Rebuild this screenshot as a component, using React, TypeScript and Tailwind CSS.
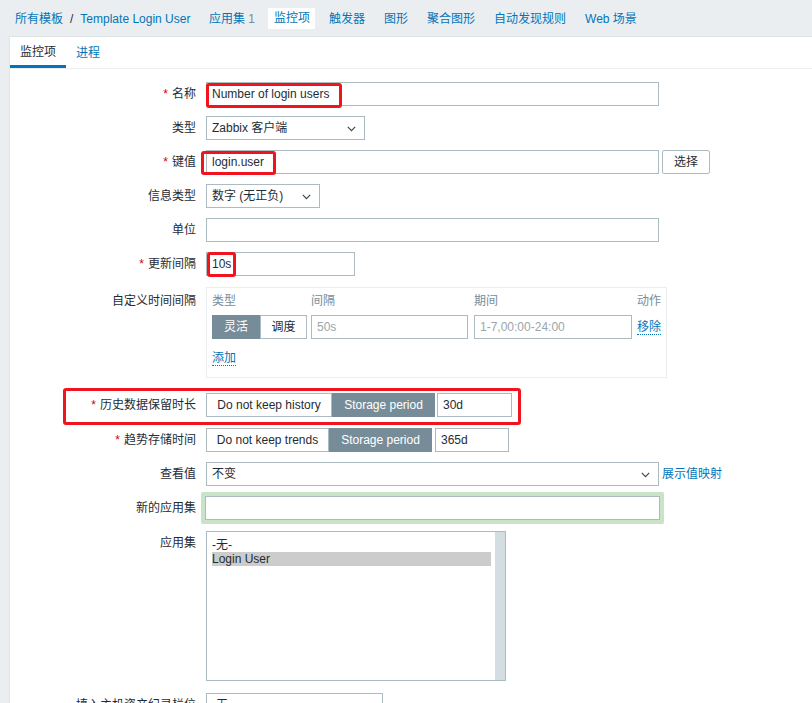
import type { ReactNode } from 'react'

const FONT = "font-['Liberation_Sans','Noto_Sans_CJK_SC',sans-serif]"

function Chevron() {
  return (
    <svg width="9" height="6" viewBox="0 0 9 6" className="absolute right-[8px] top-[9px]">
      <path d="M0.8 0.8 L4.5 4.6 L8.2 0.8" fill="none" stroke="#3a4a52" strokeWidth="1.2" />
    </svg>
  )
}

function Select({ value, className }: { value: string; className: string }) {
  return (
    <div className={`relative h-[24px] border border-[#acbbc2] bg-white pl-[5px] leading-[22px] ${className}`}>
      {value}
      <Chevron />
    </div>
  )
}

function Input({ value, className, placeholder }: { value?: string; className: string; placeholder?: string }) {
  return (
    <div className={`h-[24px] border border-[#acbbc2] bg-white px-[5px] leading-[22px] ${className}`}>
      {value ?? <span className="text-[#9aa6ac]">{placeholder}</span>}
    </div>
  )
}

function RedBox({ className }: { className: string }) {
  return <div className={`pointer-events-none absolute rounded-[3px] border-[3px] border-[#f0141e] ${className}`} />
}

function Row({
  label,
  req,
  children,
  className = '',
  labelPad = 'pt-[5px]',
}: {
  label: string
  req?: boolean
  children: ReactNode
  className?: string
  labelPad?: string
}) {
  return (
    <div className={`relative flex ${className}`}>
      <div className={`w-[196px] shrink-0 pr-[10px] text-right leading-[14px] ${labelPad}`}>
        {req && <span className="mr-[4px] text-[#d40000]">*</span>}
        {label}
      </div>
      <div className="relative">{children}</div>
    </div>
  )
}

function Segments({ left, w1, w2 }: { left: string; w1: string; w2: string }) {
  return (
    <div className="flex h-[24px]">
      <div className={`border border-[#acbbc2] bg-white text-center leading-[22px] ${w1}`}>{left}</div>
      <div className={`border border-[#768d99] bg-[#768d99] text-center leading-[22px] text-white ${w2}`}>
        Storage period
      </div>
    </div>
  )
}

export default function App() {
  const navItems = ['触发器', '图形', '聚合图形', '自动发现规则', 'Web 场景']

  return (
    <div className={`min-h-[703px] bg-[#ebeef0] text-[12px] text-[#1f2c33] ${FONT}`}>
      {/* верхняя навигация */}
      <div className="flex h-[36px] items-center pl-[15px] pt-[1px]">
        <span className="text-[#0275b8]">所有模板</span>
        <span className="mx-[7px] text-[#1f2c33]">/</span>
        <span className="text-[#0275b8]">Template Login User</span>
        <div className="ml-[9px] flex items-center">
          <span className="mx-[4px] px-[5.5px] text-[#0275b8]">
            应用集 <span className="text-[#768d99]">1</span>
          </span>
          <span className="mx-[4px] bg-white px-[5.5px] leading-[21px] text-[#0275b8]">监控项</span>
          {navItems.map((n) => (
            <span key={n} className="mx-[4px] px-[5.5px] text-[#0275b8]">
              {n}
            </span>
          ))}
        </div>
      </div>

      <div className="ml-[9px] border-l border-t border-[#dfe4e7] bg-white pb-[20px]">
        {/* вкладки */}
        <div className="flex h-[32px] border-b border-[#ebeef0]">
          <div className="flex w-[56px] items-center justify-center border-b-[3px] border-[#0275b8] pt-[2px] text-[#1f2c33]">
            监控项
          </div>
          <div className="flex items-center px-[10px] text-[#0275b8]">进程</div>
        </div>

        <div className="flex flex-col pt-[13px]">
          <Row label="名称" req>
            <Input value="Number of login users" className="w-[453px]" />
            <RedBox className="left-0 top-[1px] h-[25px] w-[136px]" />
          </Row>

          <Row label="类型" className="mt-[10px]">
            <Select value="Zabbix 客户端" className="w-[159px]" />
          </Row>

          <Row label="键值" req className="mt-[10px]">
            <div className="flex gap-[3px]">
              <Input value="login.user" className="w-[453px]" />
              <div className="h-[24px] w-[48px] rounded-[2px] border border-[#acbbc2] bg-white text-center leading-[22px]">
                选择
              </div>
            </div>
            <RedBox className="left-[-5px] top-[1px] h-[24px] w-[75px]" />
          </Row>

          <Row label="信息类型" className="mt-[10px]">
            <Select value="数字 (无正负)" className="w-[114px]" />
          </Row>

          <Row label="单位" className="mt-[10px]">
            <Input value="" className="w-[453px]" />
          </Row>

          <Row label="更新间隔" req className="mt-[10px]">
            <Input value="10s" className="w-[149px]" />
            <RedBox className="left-[1px] top-0 h-[25px] w-[29px]" />
          </Row>

          <Row label="自定义时间间隔" className="mt-[11px]" labelPad="pt-[7px]">
            <div className="w-[461px] border border-[#ebeef0] px-[5px] pb-[12px] pt-[6px]">
              <div className="flex leading-[14px] text-[#768d99]">
                <div className="w-[99px]">类型</div>
                <div className="w-[163px]">间隔</div>
                <div className="w-[163px]">期间</div>
                <div>动作</div>
              </div>
              <div className="mt-[7px] flex items-center">
                <div className="flex w-[99px]">
                  <div className="h-[24px] w-[48px] border border-[#768d99] bg-[#768d99] text-center leading-[22px] text-white">
                    灵活
                  </div>
                  <div className="h-[24px] w-[47px] border border-[#acbbc2] bg-white text-center leading-[22px]">
                    调度
                  </div>
                </div>
                <div className="w-[163px]">
                  <Input placeholder="50s" className="w-[157px]" />
                </div>
                <div className="w-[163px]">
                  <Input placeholder="1-7,00:00-24:00" className="w-[158px]" />
                </div>
                <span className="border-b border-dotted border-[#0275b8] leading-[14px] text-[#0275b8]">移除</span>
              </div>
              <div className="mt-[12px] leading-[14px]">
                <span className="border-b border-dotted border-[#0275b8] text-[#0275b8]">添加</span>
              </div>
            </div>
          </Row>

          <Row label="历史数据保留时长" req className="mt-[15px]">
            <div className="flex gap-[2px]">
              <Segments left="Do not keep history" w1="w-[126px]" w2="w-[103px]" />
              <Input value="30d" className="w-[75px]" />
            </div>
            <RedBox className="left-[-143px] top-[-5px] h-[37px] w-[458px]" />
          </Row>

          <Row label="趋势存储时间" req className="mt-[11px]">
            <div className="flex gap-[3px]">
              <Segments left="Do not keep trends" w1="w-[123px]" w2="w-[103px]" />
              <Input value="365d" className="w-[74px]" />
            </div>
          </Row>

          <Row label="查看值" className="mt-[10px]">
            <div className="flex items-center gap-[3px]">
              <Select value="不变" className="w-[453px]" />
              <span className="text-[#0275b8]">展示值映射</span>
            </div>
          </Row>

          <Row label="新的应用集" className="mt-[6px]" labelPad="pt-[9px]">
            <div className="ml-[-5px] rounded-[2px] bg-[#c8e3c8] p-[4px]">
              <Input value="" className="w-[455px]" />
            </div>
          </Row>

          <Row label="应用集" className="mt-[7px]" labelPad="pt-[5px]">
            <div className="flex h-[150px] w-[300px] border border-[#acbbc2] bg-white">
              <div className="flex-1 pl-[5px] pr-[4px] pt-[6px] leading-[14px]">
                <div>-无-</div>
                <div className="bg-[#cccccc]">Login User</div>
              </div>
              <div className="w-[10px] bg-[#d4dde1]" />
            </div>
          </Row>

          <Row label="填入主机资产纪录栏位" className="mt-[12px]">
            <Select value="-无-" className="w-[177px]" />
          </Row>
        </div>
      </div>
    </div>
  )
}
